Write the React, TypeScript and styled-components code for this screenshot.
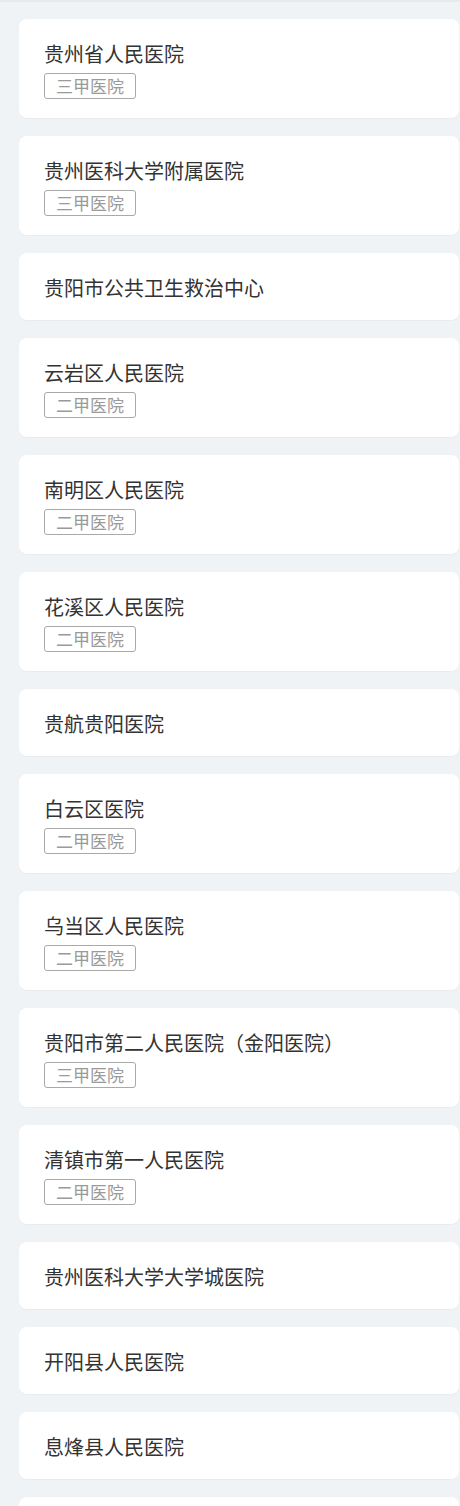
import React from 'react';
import styled, { createGlobalStyle } from 'styled-components';

const GlobalStyle = createGlobalStyle`
  html, body {
    margin: 0;
    padding: 0;
    background: #eff3f6;
  }
  body {
    font-family: "Noto Sans CJK SC", "Noto Sans", sans-serif;
    color: #333;
  }
`;

const Page = styled.div`
  height: 1506px;
  overflow: hidden;
  border-top: solid 2px #e6eaed;
  padding: 17px 1px 0 19px;
  display: flex;
  flex-direction: column;
  gap: 18px;
  box-sizing: border-box;
`;

const Card = styled.div`
  flex-shrink: 0;
  min-height: 30px;
  background: #fff;
  border-radius: 8px;
  padding: 20px 25px 17px;
  box-shadow: 0 1px 1px rgba(0, 0, 0, 0.03);
`;

const Name = styled.div`
  font-size: 20px;
  line-height: 30px;
  color: #333;
  white-space: nowrap;
`;

const Tag = styled.span`
  display: inline-block;
  margin: 4px 0 2px;
  height: 26px;
  box-sizing: border-box;
  padding: 0 11px;
  border: solid 1px #a9a9a9;
  border-radius: 3px;
  font-size: 17px;
  line-height: 24px;
  color: #9a9a9a;
`;

const DATA = [
  { id: 1, name: '贵州省人民医院', level: '三甲医院' },
  { id: 2, name: '贵州医科大学附属医院', level: '三甲医院' },
  { id: 3, name: '贵阳市公共卫生救治中心', level: '' },
  { id: 4, name: '云岩区人民医院', level: '二甲医院' },
  { id: 5, name: '南明区人民医院', level: '二甲医院' },
  { id: 6, name: '花溪区人民医院', level: '二甲医院' },
  { id: 7, name: '贵航贵阳医院', level: '' },
  { id: 8, name: '白云区医院', level: '二甲医院' },
  { id: 9, name: '乌当区人民医院', level: '二甲医院' },
  { id: 10, name: '贵阳市第二人民医院（金阳医院）', level: '三甲医院' },
  { id: 11, name: '清镇市第一人民医院', level: '二甲医院' },
  { id: 12, name: '贵州医科大学大学城医院', level: '' },
  { id: 13, name: '开阳县人民医院', level: '' },
  { id: 14, name: '息烽县人民医院', level: '' },
];

const App = () => {
  return (
    <>
      <GlobalStyle />
      <Page>
        {DATA.map((item) => (
          <Card key={item.id}>
            <Name>{item.name}</Name>
            {item.level && <Tag>{item.level}</Tag>}
          </Card>
        ))}
        {/* next card is only peeking in at the bottom edge */}
        <Card />
      </Page>
    </>
  );
};

export default App;
